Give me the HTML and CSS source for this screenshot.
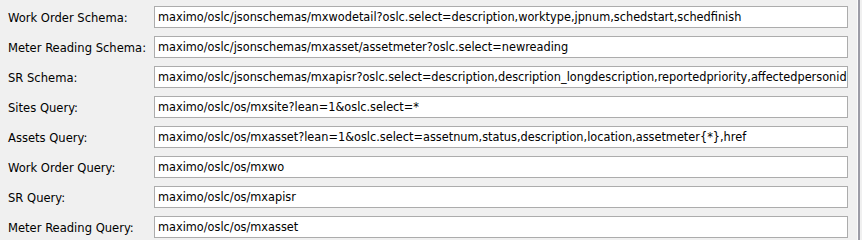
FILE: index.html
```html
<!DOCTYPE html>
<html>
<head>
<meta charset="utf-8">
<link rel="stylesheet" href="styles.css">
</head>
<body>
<div class="frame">
  <div class="form">
    <div class="row"><span class="label">Work Order Schema:</span><div class="field">maximo/oslc/jsonschemas/mxwodetail?oslc.select=description,worktype,jpnum,schedstart,schedfinish</div></div>
    <div class="row"><span class="label">Meter Reading Schema:</span><div class="field">maximo/oslc/jsonschemas/mxasset/assetmeter?oslc.select=newreading</div></div>
    <div class="row"><span class="label">SR Schema:</span><div class="field">maximo/oslc/jsonschemas/mxapisr?oslc.select=description,description_longdescription,reportedpriority,affectedpersonid</div></div>
    <div class="row"><span class="label">Sites Query:</span><div class="field">maximo/oslc/os/mxsite?lean=1&amp;oslc.select=*</div></div>
    <div class="row"><span class="label">Assets Query:</span><div class="field">maximo/oslc/os/mxasset?lean=1&amp;oslc.select=assetnum,status,description,location,assetmeter{*},href</div></div>
    <div class="row"><span class="label">Work Order Query:</span><div class="field">maximo/oslc/os/mxwo</div></div>
    <div class="row"><span class="label">SR Query:</span><div class="field">maximo/oslc/os/mxapisr</div></div>
    <div class="row"><span class="label">Meter Reading Query:</span><div class="field">maximo/oslc/os/mxasset</div></div>
  </div>
  <div class="edge"></div>
</div>
</body>
</html>
```
FILE: styles.css
```css
html, body {
  margin: 0;
  padding: 0;
  background: #f0f0f0;
}
body {
  width: 862px;
  height: 240px;
  overflow: hidden;
  font-family: Tahoma, "DejaVu Sans Condensed", "DejaVu Sans", sans-serif;
  font-size: 12.6px;
  color: #000;
}
.frame {
  display: flex;
  height: 240px;
}
.form {
  flex: 1;
  display: flex;
  flex-direction: column;
  gap: 8px;
  padding: 6px 8px 0 8px;
}
.row {
  display: grid;
  grid-template-columns: 146px 694px;
  align-items: center;
  height: 22px;
}
.label {
  white-space: nowrap;
  font-size: 12.85px;
}
.field {
  box-sizing: border-box;
  height: 22px;
  border: 1px solid #acacac;
  background: #fff;
  padding: 0 0 0 3px;
  line-height: 20px;
  white-space: nowrap;
  overflow: hidden;
}
.edge {
  width: 5px;
  margin-left: 1px;
  border-left: 1px solid #fbfbfb;
}
.edge::before {
  content: "";
  display: block;
  width: 2px;
  height: 100%;
  background: #9c9ca6;
}
```
